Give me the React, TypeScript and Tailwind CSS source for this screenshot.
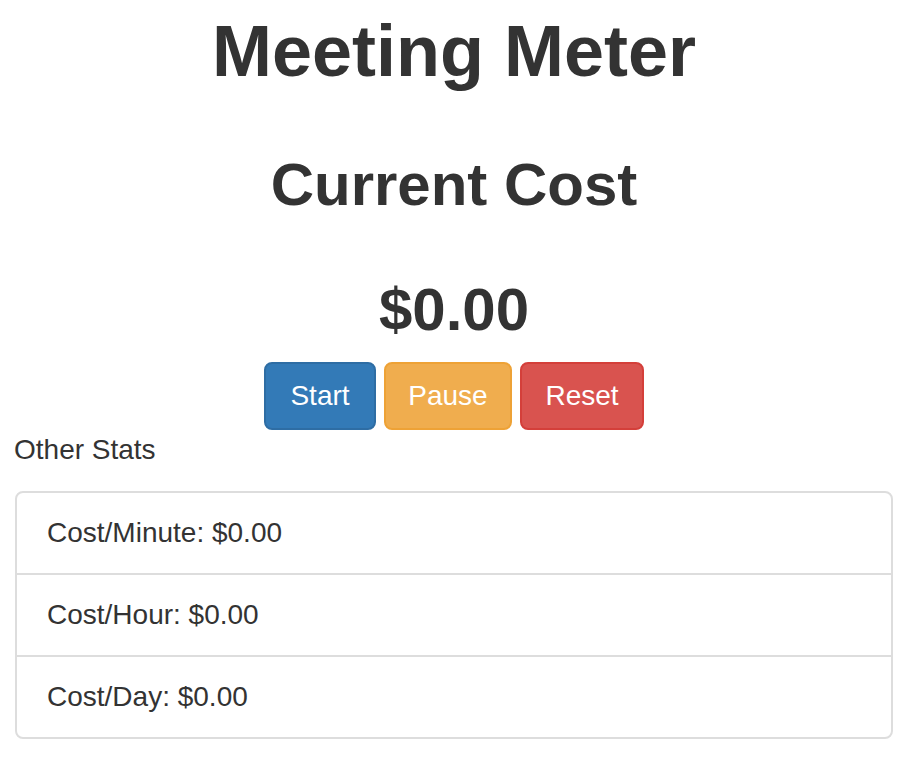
import React from "react";

export default function App() {
  const font = { fontFamily: '"Liberation Sans", Arial, Helvetica, sans-serif' };
  return (
    <div className="bg-white min-h-[760px] text-[#333]" style={font}>
      <div className="pl-[15px] pr-[27px] pt-[12px]">
        <h1 className="text-center text-[72px] leading-[79px] font-bold">Meeting Meter</h1>
        <h2 className="mt-[61px] text-center text-[60px] leading-[66px] font-bold">Current Cost</h2>
        <h2 className="mt-[59px] text-center text-[60px] leading-[66px] font-bold">$0.00</h2>
        <div className="mt-[19px] flex justify-center gap-[8px]">
          <button className="h-[68px] w-[112px] rounded-[8px] border-2 border-[#2e6da4] bg-[#337ab7] text-white text-[28px] leading-[40px]">
            Start
          </button>
          <button className="h-[68px] w-[128px] rounded-[8px] border-2 border-[#eea236] bg-[#f0ad4e] text-white text-[28px] leading-[40px]">
            Pause
          </button>
          <button className="h-[68px] w-[124px] rounded-[8px] border-2 border-[#d43f3a] bg-[#d9534f] text-white text-[28px] leading-[40px]">
            Reset
          </button>
        </div>
        <div className="text-[28px] leading-[40px] mt-[0px] -ml-[1px]">Other Stats</div>
        <div className="mt-[21px] border-2 border-[#ddd] rounded-[8px]">
          <div className="px-[30px] py-[20px] text-[28px] leading-[40px]">Cost/Minute: $0.00</div>
          <div className="px-[30px] py-[20px] text-[28px] leading-[40px] border-t-2 border-[#ddd]">Cost/Hour: $0.00</div>
          <div className="px-[30px] py-[20px] text-[28px] leading-[40px] border-t-2 border-[#ddd]">Cost/Day: $0.00</div>
        </div>
      </div>
    </div>
  );
}
